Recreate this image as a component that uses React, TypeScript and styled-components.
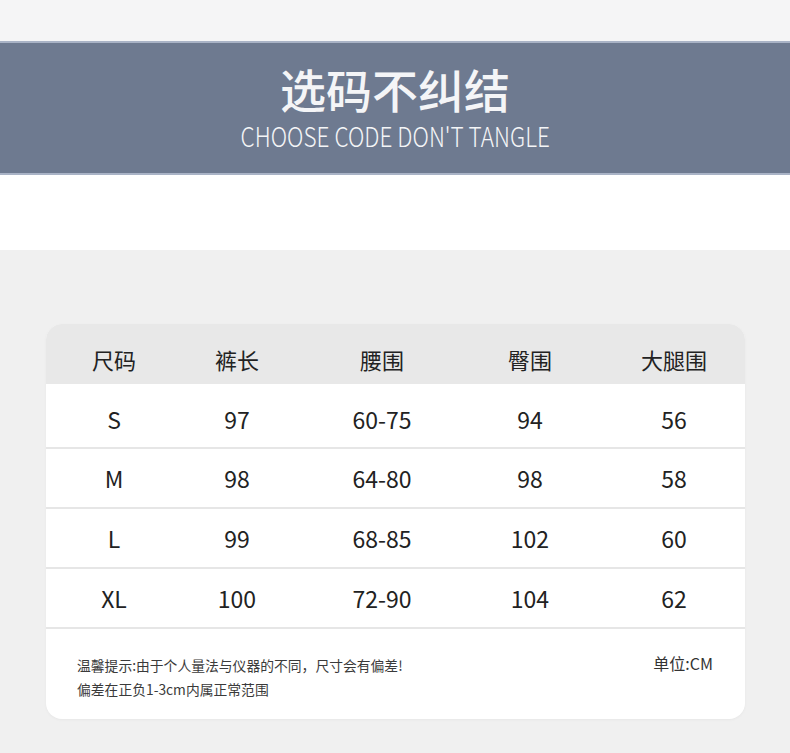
import styled, { createGlobalStyle } from "styled-components";

const GlobalStyle = createGlobalStyle`
    html, body {
        margin: 0;
        padding: 0;
        background: #f0f0f0;
    }
    body {
        width: 790px;
        font-family: "Noto Sans CJK SC", "Noto Sans", sans-serif;
        color: #222;
    }
`

interface ISizeRow {
    size: string
    length: string
    waist: string
    hip: string
    thigh: string
}

const headers = ["尺码", "裤长", "腰围", "臀围", "大腿围"]

const rows: ISizeRow[] = [
    { size: "S", length: "97", waist: "60-75", hip: "94", thigh: "56" },
    { size: "M", length: "98", waist: "64-80", hip: "98", thigh: "58" },
    { size: "L", length: "99", waist: "68-85", hip: "102", thigh: "60" },
    { size: "XL", length: "100", waist: "72-90", hip: "104", thigh: "62" },
]

const TopStrip = styled.div`
    height: 41px;
    background: #f5f5f6;
`

const Banner = styled.header`
    height: 134px;
    box-sizing: border-box;
    background: #6e7a90;
    border-top: 2px solid #a9b3c6;
    border-bottom: 2px solid #a9b3c6;
    display: flex;
    flex-direction: column;
    align-items: center;
    color: #f4f5f7;
`

const Title = styled.h1`
    margin: 20px 0 0;
    font-size: 46px;
    line-height: 50px;
    font-weight: 500;
    letter-spacing: 0;
`

const Subtitle = styled.p`
    margin: 8px 0 0;
    font-size: 27px;
    line-height: 30px;
    font-weight: 300;
    transform: scaleX(0.835);
    white-space: nowrap;
`

const WhiteGap = styled.div`
    height: 75px;
    background: #ffffff;
`

const Section = styled.section`
    padding: 74px 45px 34px 46px;
    background: #f0f0f0;
`

const Card = styled.div`
    background: #ffffff;
    border-radius: 16px;
    overflow: hidden;
    box-shadow: 0 1px 3px rgba(0, 0, 0, 0.04);
`

const Grid = styled.div<{ $height: number; $head?: boolean; $pad?: number }>`
    display: grid;
    grid-template-columns: 136px 110px 180px 116px 157px;
    height: ${(p) => p.$height}px;
    box-sizing: border-box;
    padding-top: ${(p) => p.$pad ?? 0}px;
    align-items: center;
    background: ${(p) => (p.$head ? "#e8e8e8" : "#ffffff")};
    border-bottom: ${(p) => (p.$head ? "none" : "2px solid #e6e6e6")};
`

const Cell = styled.div<{ $head?: boolean }>`
    text-align: center;
    font-size: ${(p) => (p.$head ? 22 : 23)}px;
    color: #222;
    &:last-child {
        padding-left: 15px;
    }
`

const Footer = styled.div`
    height: 90px;
    display: flex;
    justify-content: space-between;
    padding: 24px 32px 0 31px;
    box-sizing: border-box;
`

const Note = styled.p`
    margin: 0;
    font-size: 13.8px;
    line-height: 24px;
    color: #3a3a3a;
`

const Unit = styled.span`
    font-size: 16px;
    line-height: 20px;
    color: #333;
`

export default function App() {
    return (
        <>
            <GlobalStyle />
            <TopStrip />
            <Banner>
                <Title>选码不纠结</Title>
                <Subtitle>CHOOSE CODE DON'T TANGLE</Subtitle>
            </Banner>
            <WhiteGap />
            <Section>
                <Card>
                    <Grid $height={60} $head $pad={10}>
                        {headers.map((h) => (
                            <Cell $head key={h}>{h}</Cell>
                        ))}
                    </Grid>
                    {rows.map((r, index) => (
                        <Grid $height={index === 0 ? 65 : 60} $pad={index === 0 ? 6 : 0} key={r.size}>
                            <Cell>{r.size}</Cell>
                            <Cell>{r.length}</Cell>
                            <Cell>{r.waist}</Cell>
                            <Cell>{r.hip}</Cell>
                            <Cell>{r.thigh}</Cell>
                        </Grid>
                    ))}
                    <Footer>
                        <Note>
                            温馨提示:由于个人量法与仪器的不同，尺寸会有偏差!
                            <br />
                            偏差在正负1-3cm内属正常范围
                        </Note>
                        <Unit>单位:CM</Unit>
                    </Footer>
                </Card>
            </Section>
        </>
    )
}
